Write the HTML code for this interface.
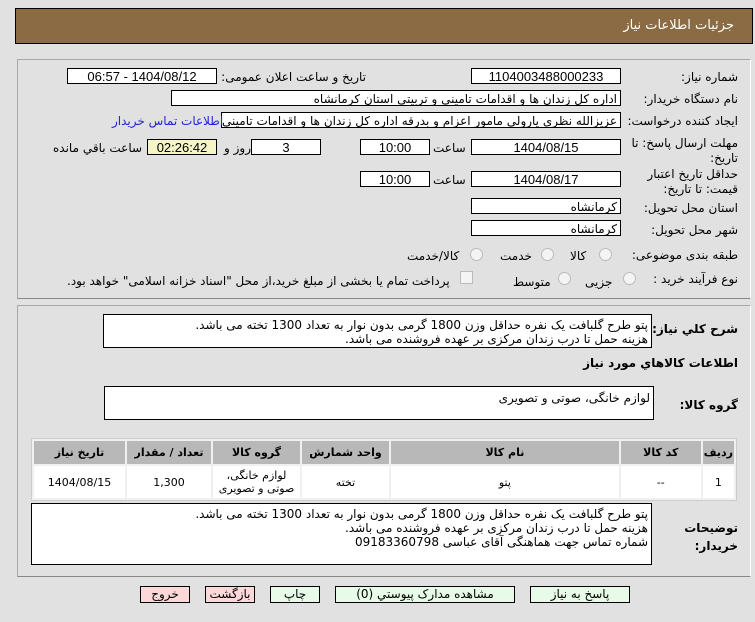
<!DOCTYPE html>
<html><head><meta charset="utf-8"><style>
body{margin:0;width:755px;height:622px;background:#e1e1e1;font-family:"DejaVu Sans","Liberation Sans",sans-serif;font-size:12px;color:#000;position:relative;overflow:hidden;direction:rtl}
.a{position:absolute}
.hdr{left:15px;top:8px;width:736px;height:34px;background:#8b6b43;border:1px solid #000}
.hdr span{position:absolute;right:18px;top:9px;color:#fff;font-size:13px}
.pan{border:1px solid #a8a8a8;border-right-color:#fff;border-bottom-color:#888}
.box{background:#fff;border:1px solid #000;height:16px;line-height:16px;text-align:center;box-sizing:border-box;white-space:nowrap;overflow:hidden;font-family:"Liberation Sans","DejaVu Sans",sans-serif;font-size:13px}
.box.r{text-align:right;padding-right:3px;font-family:"DejaVu Sans",sans-serif;font-size:12px}
.lbl{white-space:nowrap}
.wr{white-space:normal;text-align:right}
.ta{background:#fff;border:1px solid #000;box-sizing:border-box;text-align:right;padding:2px 3px;line-height:18px;font-size:12px}
.rad{width:11px;height:11px;border:1px solid #bbb;border-radius:50%;background:#f4f4f4}
table{border-collapse:separate;border-spacing:2px;background:#f0f0f0;border:1px solid #ccc}
th{background:#b8b8b8;font-weight:bold;font-size:11px;height:21px}
td{background:#fff;text-align:center;font-size:11px;height:30px}
.btn{height:17px;border:1px solid #000;box-sizing:border-box;text-align:center;line-height:15px;font-size:12px}
</style></head><body>
<div class="a hdr"><span>جزئیات اطلاعات نیاز</span></div>
<div class="a pan" style="left:17px;top:59px;width:732px;height:238px"></div>
<div class="a pan" style="left:17px;top:305px;width:732px;height:270px"></div>

<div class="a lbl" style="right:17px;top:70px">شماره نیاز:</div>
<div class="a box" style="left:471px;top:68px;width:150px">1104003488000233</div>
<div class="a lbl" style="right:389px;top:70px">تاریخ و ساعت اعلان عمومی:</div>
<div class="a box" style="left:67px;top:68px;width:150px">1404/08/12 - 06:57</div>

<div class="a lbl" style="right:17px;top:92px">نام دستگاه خریدار:</div>
<div class="a box r" style="left:171px;top:90px;width:450px">اداره کل زندان ها و اقدامات تامینی و تربیتی استان کرمانشاه</div>

<div class="a lbl" style="right:17px;top:114px">ایجاد کننده درخواست:</div>
<div class="a box r" style="left:221px;top:112px;width:400px">عزیزالله نظری یارولی مامور اعزام و بدرقه اداره کل زندان ها و اقدامات تامینی و تربیتی</div>
<div class="a lbl" style="left:112px;top:114px;color:#2222dd">اطلاعات تماس خریدار</div>

<div class="a wr" style="right:17px;top:136px;line-height:15px;width:112px">مهلت ارسال پاسخ: تا تاریخ:</div>
<div class="a box" style="left:471px;top:139px;width:150px">1404/08/15</div>
<div class="a lbl" style="left:433px;top:141px">ساعت</div>
<div class="a box" style="left:360px;top:139px;width:70px">10:00</div>
<div class="a box" style="left:251px;top:139px;width:70px">3</div>
<div class="a lbl" style="left:224px;top:141px">روز و</div>
<div class="a box" style="left:147px;top:139px;width:70px;background:#f5f5c8">02:26:42</div>
<div class="a lbl" style="left:53px;top:141px">ساعت باقي مانده</div>

<div class="a wr" style="right:17px;top:167px;line-height:15px;width:100px">حداقل تاریخ اعتبار قیمت: تا تاریخ:</div>
<div class="a box" style="left:471px;top:171px;width:150px">1404/08/17</div>
<div class="a lbl" style="left:433px;top:173px">ساعت</div>
<div class="a box" style="left:360px;top:171px;width:70px">10:00</div>

<div class="a lbl" style="right:17px;top:201px">استان محل تحویل:</div>
<div class="a box r" style="left:471px;top:198px;width:150px">کرمانشاه</div>
<div class="a lbl" style="right:17px;top:223px">شهر محل تحویل:</div>
<div class="a box r" style="left:471px;top:220px;width:150px">کرمانشاه</div>

<div class="a lbl" style="right:17px;top:248px">طبقه بندی موضوعی:</div>
<div class="a rad" style="left:599px;top:248px"></div><div class="a lbl" style="left:570px;top:249px">کالا</div>
<div class="a rad" style="left:541px;top:248px"></div><div class="a lbl" style="left:500px;top:249px">خدمت</div>
<div class="a rad" style="left:470px;top:248px"></div><div class="a lbl" style="left:407px;top:249px">کالا/خدمت</div>

<div class="a lbl" style="right:17px;top:272px">نوع فرآیند خرید :</div>
<div class="a rad" style="left:623px;top:272px"></div><div class="a lbl" style="left:585px;top:275px">جزیی</div>
<div class="a rad" style="left:558px;top:272px"></div><div class="a lbl" style="left:513px;top:275px">متوسط</div>
<div class="a" style="left:460px;top:271px;width:11px;height:11px;border:1px solid #bbb;background:#f4f4f4"></div>
<div class="a lbl" style="left:67px;top:274px">پرداخت تمام یا بخشی از مبلغ خرید،از محل "اسناد خزانه اسلامی" خواهد بود.</div>

<div class="a lbl" style="right:17px;top:322px;font-weight:bold">شرح كلي نياز:</div>
<div class="a ta" style="left:103px;top:314px;width:549px;height:34px;line-height:14px;padding-top:3px">پتو طرح گلبافت یک نفره حداقل وزن 1800 گرمی بدون نوار به تعداد 1300 تخته می باشد.<br>هزینه حمل تا درب زندان مرکزی بر عهده فروشنده می باشد.</div>
<div class="a lbl" style="right:17px;top:356px;font-weight:bold">اطلاعات كالاهاي مورد نياز</div>
<div class="a lbl" style="right:17px;top:398px;font-weight:bold">گروه کالا:</div>
<div class="a ta" style="left:104px;top:386px;width:550px;height:34px">لوازم خانگی، صوتی و تصویری</div>

<table class="a" style="left:31px;top:438px;width:706px">
<tr><th style="width:25px">ردیف</th><th style="width:78px">کد کالا</th><th>نام کالا</th><th style="width:85px">واحد شمارش</th><th style="width:85px">گروه کالا</th><th style="width:82px">تعداد / مقدار</th><th style="width:89px">تاریخ نیاز</th></tr>
<tr><td>1</td><td>--</td><td>پتو</td><td>تخته</td><td>لوازم خانگی،<br>صوتی و تصویری</td><td>1,300</td><td>1404/08/15</td></tr>
</table>

<div class="a lbl" style="right:17px;top:519px;font-weight:bold;line-height:18px">توضیحات<br>خریدار:</div>
<div class="a ta" style="left:31px;top:503px;width:621px;height:62px;line-height:14px;padding-top:3px">پتو طرح گلبافت یک نفره حداقل وزن 1800 گرمی بدون نوار به تعداد 1300 تخته می باشد.<br>هزینه حمل تا درب زندان مرکزی بر عهده فروشنده می باشد.<br>شماره تماس جهت هماهنگی آقای عباسی 09183360798</div>

<div class="a btn" style="left:530px;top:586px;width:100px;background:#e8fbe8">پاسخ به نیاز</div>
<div class="a btn" style="left:335px;top:586px;width:180px;background:#e8fbe8">مشاهده مدارک پیوستي (0)</div>
<div class="a btn" style="left:270px;top:586px;width:50px;background:#e8fbe8">چاپ</div>
<div class="a btn" style="left:205px;top:586px;width:50px;background:#fcd8d8">بازگشت</div>
<div class="a btn" style="left:140px;top:586px;width:50px;background:#fcd8d8">خروج</div>
</body></html>
